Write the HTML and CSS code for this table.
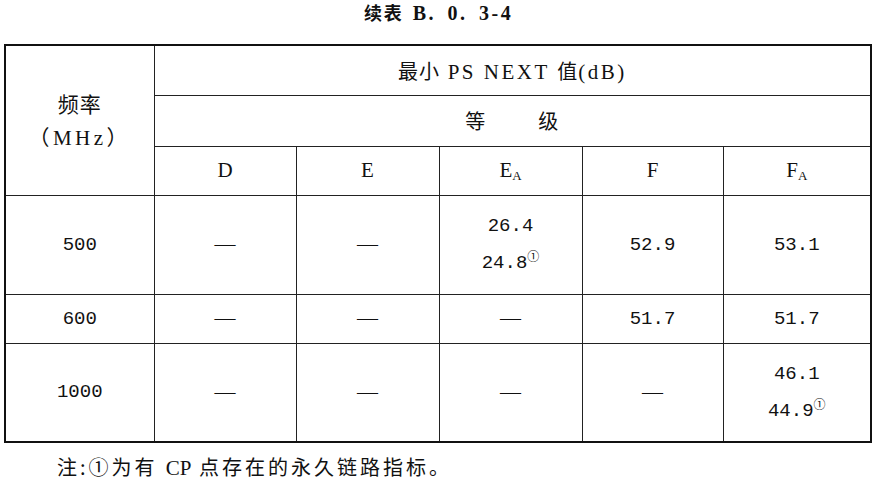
FILE: index.html
```html
<!DOCTYPE html>
<html lang="zh">
<head>
<meta charset="utf-8">
<link rel="stylesheet" href="styles.css">
</head>
<body>
<div class="page">
  <h1 class="title"><span class="t-cjk">续表</span> <span class="t-lat">B. 0. 3-4</span></h1>
  <table class="spec">
    <colgroup>
      <col class="c0"><col class="c1"><col class="c2"><col class="c3"><col class="c4"><col class="c5">
    </colgroup>
    <tr class="h1">
      <td rowspan="3" class="freq"><div class="cjk big">频率</div><div class="unit">（MHz）</div></td>
      <td colspan="5" class="cap"><span class="cjk">最小</span> PS NEXT <span class="cjk">值</span>(dB)</td>
    </tr>
    <tr class="h2">
      <td colspan="5" class="cap"><span class="cjk">等</span><span class="gap"></span><span class="cjk">级</span></td>
    </tr>
    <tr class="h3">
      <td class="lat">D</td>
      <td class="lat">E</td>
      <td class="lat">E<sub>A</sub></td>
      <td class="lat">F</td>
      <td class="lat">F<sub>A</sub></td>
    </tr>
    <tr class="r-tall">
      <td class="num">500</td>
      <td class="dash">—</td>
      <td class="dash">—</td>
      <td class="num"><div class="l1">26.4</div><div class="l2">24.8<sup>①</sup></div></td>
      <td class="num">52.9</td>
      <td class="num">53.1</td>
    </tr>
    <tr class="r-short">
      <td class="num">600</td>
      <td class="dash">—</td>
      <td class="dash">—</td>
      <td class="dash">—</td>
      <td class="num">51.7</td>
      <td class="num">51.7</td>
    </tr>
    <tr class="r-tall">
      <td class="num">1000</td>
      <td class="dash">—</td>
      <td class="dash">—</td>
      <td class="dash">—</td>
      <td class="dash">—</td>
      <td class="num"><div class="l1">46.1</div><div class="l2">44.9<sup>①</sup></div></td>
    </tr>
  </table>
  <p class="note"><span class="n-cjk">注:①为有</span> CP <span class="n-cjk">点存在的永久链路指标。</span></p>
</div>
</body>
</html>
```

FILE: styles.css
```css
html, body {
  margin: 0;
  padding: 0;
  background: #ffffff;
  color: #111111;
}
.page {
  width: 877px;
  font-family: "Liberation Serif", "Noto Sans CJK SC", serif;
}
.title {
  margin: 0;
  height: 44px;
  box-sizing: border-box;
  padding-top: 0;
  text-align: center;
  font-size: 19px;
  line-height: 24px;
  font-weight: bold;
  word-spacing: 4px;
}
.t-cjk {
  font-family: "Noto Sans CJK SC", sans-serif;
  font-size: 18px;
  letter-spacing: 2px;
}
.t-lat {
  font-family: "Liberation Serif", serif;
  font-size: 20px;
  letter-spacing: 2.5px;
}
.spec {
  margin-left: 4px;
  width: 868px;
  table-layout: fixed;
  border-collapse: collapse;
  border: 2px solid #111;
}
.c0 { width: 149px; }
.c1 { width: 142px; }
.c2 { width: 143px; }
.c3 { width: 143px; }
.c4 { width: 141px; }
.c5 { width: 148px; }
.spec td {
  border: 1px solid #222;
  text-align: center;
  vertical-align: middle;
  padding: 0;
  font-size: 21px;
}
.h1 { height: 50px; }
.h2 { height: 51px; }
.h3 { height: 49px; }
.r-tall { height: 99px; }
.r-short { height: 49px; }
.cjk {
  font-family: "Noto Sans CJK SC", sans-serif;
  font-size: 20px;
  letter-spacing: 1px;
}
.freq .big {
  font-size: 21px;
  letter-spacing: 1px;
  line-height: 26px;
  margin-bottom: 10px;
}
.unit {
  font-size: 21px;
  line-height: 24px;
  letter-spacing: 3.5px;
}
.cap {
  letter-spacing: 2.5px;
}
.gap {
  display: inline-block;
  width: 52px;
}
.lat {
  font-size: 22px;
}
.lat sub {
  font-size: 13px;
  vertical-align: -3px;
}
.num {
  font-family: "Liberation Mono", monospace;
  font-size: 19px;
}
.spec td.num { font-size: 19px; }
.num .l1 { line-height: 22px; margin-bottom: 15px; }
.num .l2 { line-height: 22px; }
.num sup {
  font-family: "Noto Sans CJK SC", sans-serif;
  font-size: 12px;
  vertical-align: 7px;
  line-height: 0;
}
.spec td.dash {
  font-family: "Liberation Serif", serif;
  font-size: 21px;
}
.note {
  margin: 11px 0 0 57px;
  font-size: 21px;
  line-height: 26px;
  word-spacing: 3px;
}
.n-cjk {
  font-family: "Noto Sans CJK SC", sans-serif;
  font-size: 20px;
  letter-spacing: 3px;
}
```
